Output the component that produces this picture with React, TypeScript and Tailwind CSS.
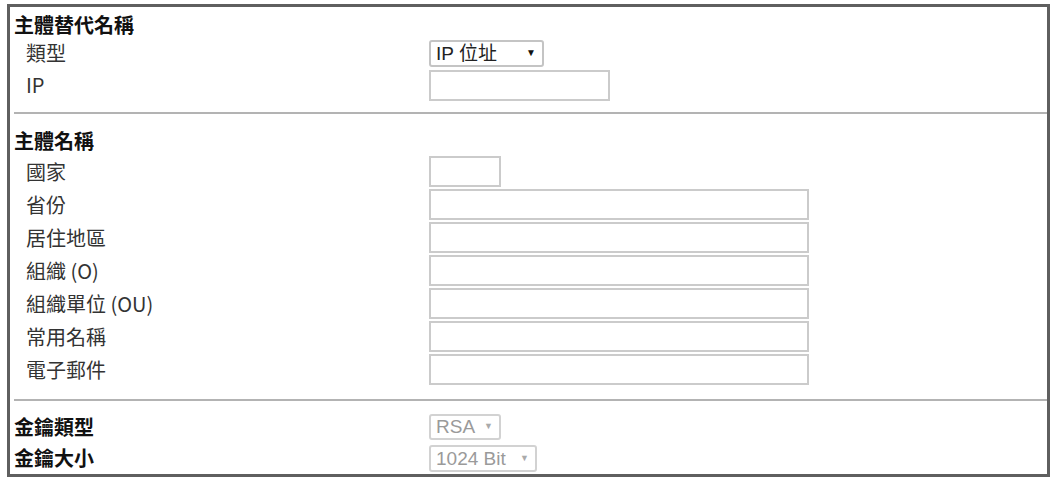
import React from "react";

const Row = ({ label, className, children }: { label: string; className: string; children: React.ReactNode }) => (
  <div className={`flex items-center ${className}`}>
    <div className="w-[419px] shrink-0 pl-[16px] text-[20px] leading-none text-[#333]">{label}</div>
    {children}
  </div>
);

const Heading = ({ children, className }: { children: React.ReactNode; className: string }) => (
  <div className={`flex items-center pl-[4px] text-[20px] font-bold leading-none text-[#111] ${className}`}>{children}</div>
);

const TextBox = ({ className }: { className: string }) => (
  <input type="text" readOnly className={`h-[31px] border-2 border-[#cbcbcb] bg-white outline-none ${className}`} />
);

const Select = ({ value, className, disabled }: { value: string; className: string; disabled?: boolean }) => (
  <div
    className={`flex items-center justify-between rounded-[3px] border-2 pl-[5px] pr-[6px] font-['Liberation_Sans','Noto_Sans_CJK_TC',sans-serif] text-[19px] leading-none ${
      disabled ? "border-[#d2d2d2] text-[#9a9a9a]" : "border-[#c4c4c4] text-[#222]"
    } ${className}`}
  >
    <span>{value}</span>
    <span className={disabled ? "text-[9px] text-[#aaa]" : "text-[10px] text-[#111]"}>▼</span>
  </div>
);

export default function App() {
  return (
    <div className="min-h-[482px] bg-white pl-[7px] pt-[4px] font-['Noto_Sans_CJK_TC','Noto_Sans',sans-serif]">
      <div className="w-[1043px] border-[3px] border-[#5f5f5f] bg-white">
        <div className="pt-[5px]">
          <Heading className="h-[26px]">主體替代名稱</Heading>
          <Row label="類型" className="h-[30px]">
            <Select value="IP 位址" className="h-[27px] w-[115px]" />
          </Row>
          <Row label="IP" className="h-[34px]">
            <TextBox className="w-[181px]" />
          </Row>
        </div>

        <div className="ml-[4px] mt-[10px] h-[2px] bg-[#b3b3b3]" />

        <div className="pt-[13px]">
          <Heading className="h-[28px]">主體名稱</Heading>
          <Row label="國家" className="h-[33px]">
            <TextBox className="w-[72px]" />
          </Row>
          {["省份", "居住地區", "組織 (O)", "組織單位 (OU)", "常用名稱", "電子郵件"].map((l) => (
            <Row key={l} label={l} className="h-[33px]">
              <TextBox className="w-[380px]" />
            </Row>
          ))}
        </div>

        <div className="ml-[4px] mt-[13px] h-[2px] bg-[#b3b3b3]" />

        <div className="pt-[10px]">
          <div className="flex h-[31px] items-center">
            <div className="w-[419px] shrink-0 pl-[4px] text-[20px] font-bold leading-none text-[#111]">金鑰類型</div>
            <Select value="RSA" disabled className="h-[26px] w-[72px]" />
          </div>
          <div className="flex h-[32px] items-center">
            <div className="w-[419px] shrink-0 pl-[4px] text-[20px] font-bold leading-none text-[#111]">金鑰大小</div>
            <Select value="1024 Bit" disabled className="h-[27px] w-[108px]" />
          </div>
        </div>
      </div>
    </div>
  );
}
